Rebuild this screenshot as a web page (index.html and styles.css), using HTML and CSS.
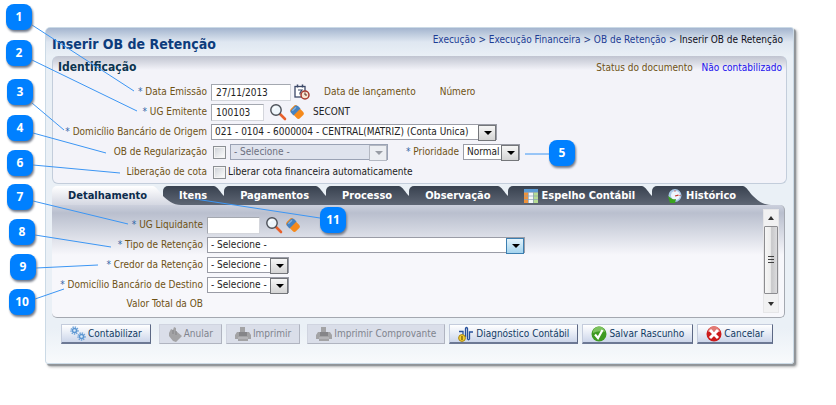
FILE: index.html
```
<!DOCTYPE html>
<html lang="pt-BR">
<head>
    <meta charset="utf-8">
    <title>Inserir OB de Retenção</title>
    <link rel="stylesheet" href="styles.css">
</head>
<body>
<!-- Shared icons -->
<svg class="sprite" aria-hidden="true">
    <defs>
        <linearGradient id="tab-dark" x2="0" y2="1"><stop stop-color="#38414f"/><stop offset="1" stop-color="#5e6674"/></linearGradient>
        <linearGradient id="tab-light" x2="0" y2="1"><stop stop-color="#fff"/><stop offset="1" stop-color="#d4d7e2"/></linearGradient>
    </defs>
    <symbol id="icon-search" viewBox="0 0 18 18">
        <path d="M11 11l5 5" stroke="#e8602c" stroke-width="2.6" stroke-linecap="round"/>
        <circle cx="7" cy="7" r="5.2" fill="#eef5fb" stroke="#4c5058" stroke-width="1.4"/>
        <path d="M4.5 6.5a3 3 0 0 1 3-2.5" fill="none" stroke="#fff" stroke-width="1.2"/>
    </symbol>
    <symbol id="icon-eraser" viewBox="0 0 14 14">
        <rect x="2.5" y="0.5" width="9" height="13" rx="2.5" fill="#f58a1c" transform="rotate(-45 7 7)"/>
        <path d="M1 5.500 5 1q1.500-1.200 3 0l2.500 2.500L3.500 10.500 1 7.700q-.8-1 0-2.200z" fill="#4682c0"/>
        <path d="M2.300 5.800 6 2.200" stroke="#86b2de" stroke-width="1.200"/>
    </symbol>
    <symbol id="icon-printer" viewBox="0 0 16 14">
        <path d="M5 0h5v5h4l2 3v4h-3v2H3v-2H0V8l2-3h3z" fill="#a3a3a5"/>
        <path d="M4 5h8v4H4z" fill="#858588"/>
        <path d="M3 11h10" stroke="#c4c4c8"/>
    </symbol>
    <symbol id="icon-gear" viewBox="0 0 10 10">
        <circle cx="5" cy="5" r="3.900" fill="none" stroke="#6fa3d8" stroke-width="1.600" stroke-dasharray="1.500 1.100"/>
        <circle cx="5" cy="5" r="2.300" fill="#dcebf8" stroke="#5c96d2" stroke-width="1.700"/>
    </symbol>
    <symbol id="tab-curve" viewBox="0 0 28 19">
        <path d="M0 0C4 1 6 6 10 10C14 14 20 19 28 19H0z"/>
    </symbol>
</svg>

<main class="window">
    <header class="window-header">
        <h1 class="window-title">Inserir OB de Retenção</h1>
        <nav class="breadcrumb">
            <a href="#">Execução</a> &gt; <a href="#">Execução Financeira</a> &gt; <a href="#">OB de Retenção</a> &gt; <span class="current">Inserir OB de Retenção</span>
        </nav>
    </header>

    <section class="section">
        <div class="section-header">
            <h2 class="section-title">Identificação</h2>
            <div class="doc-status">Status do documento <span class="doc-status-value">Não contabilizado</span></div>
        </div>

        <div class="row">
            <label class="label" for="data-emissao"><span class="req">*</span> Data Emissão</label>
            <input class="input input-date" id="data-emissao" type="text" value="27/11/2013">
            <button class="icon-btn" type="button" aria-label="Calendário">
                <svg width="16" height="16" viewBox="0 0 16 16">
                    <rect x="1" y="2.500" width="10" height="10.500" fill="#fff" stroke="#3c4868" stroke-width="1.300"/>
                    <path d="M3.500 0.500v3M8.500 0.500v3" stroke="#3c4868" stroke-width="1.500"/>
                    <path d="M4 6h4L6 9v1.500" fill="none" stroke="#3c4868" stroke-width="1.200"/>
                    <circle cx="11" cy="11" r="4" fill="#f7e4d0" stroke="#a83a2e" stroke-width="1.500"/>
                    <path d="M11 8.500V11h2" fill="none" stroke="#5a2a22"/>
                </svg>
            </button>
            <span class="caption">Data de lançamento</span>
            <span class="caption">Número</span>
        </div>
        <div class="row">
            <label class="label" for="ug-emitente"><span class="req">*</span> UG Emitente</label>
            <input class="input input-code" id="ug-emitente" type="text" value="100103">
            <button class="icon-btn" type="button" aria-label="Pesquisar"><svg width="18" height="18"><use href="#icon-search"/></svg></button>
            <button class="icon-btn" type="button" aria-label="Limpar"><svg width="14" height="14"><use href="#icon-eraser"/></svg></button>
            <span class="value">SECONT</span>
        </div>
        <div class="row">
            <label class="label" for="domicilio-origem"><span class="req">*</span> Domicílio Bancário de Origem</label>
            <span class="select select-account">
                <select id="domicilio-origem"><option>021 - 0104 - 6000004 - CENTRAL(MATRIZ) (Conta Unica)</option></select>
            </span>
        </div>
        <div class="row">
            <label class="label" for="ob-regularizacao">OB de Regularização</label>
            <input class="checkbox" id="ob-regularizacao" type="checkbox">
            <span class="select select-disabled">
                <select aria-label="Tipo de regularização" disabled><option>- Selecione -</option></select>
            </span>
            <label class="label-inline" for="prioridade"><span class="req">*</span> Prioridade</label>
            <span class="select select-priority">
                <select id="prioridade"><option>Normal</option></select>
            </span>
        </div>
        <div class="row">
            <span class="label">Liberação de cota</span>
            <input class="checkbox" id="liberar-cota" type="checkbox">
            <label class="check-text" for="liberar-cota">Liberar cota financeira automaticamente</label>
        </div>
    </section>

    <div class="tabs" role="tablist">
        <button class="tab active" type="button" role="tab" aria-selected="true">Detalhamento<svg class="tab-end"><use href="#tab-curve"/></svg></button>
        <button class="tab" type="button" role="tab">Itens<svg class="tab-end"><use href="#tab-curve"/></svg></button>
        <button class="tab" type="button" role="tab">Pagamentos<svg class="tab-end"><use href="#tab-curve"/></svg></button>
        <button class="tab" type="button" role="tab">Processo<svg class="tab-end"><use href="#tab-curve"/></svg></button>
        <button class="tab" type="button" role="tab">Observação<svg class="tab-end"><use href="#tab-curve"/></svg></button>
        <button class="tab" type="button" role="tab">
            <svg width="14" height="14" viewBox="0 0 14 14">
                <rect width="14" height="14" fill="#f4f7fa"/>
                <rect width="14" height="3" fill="#5b9bd5"/>
                <rect y="3" width="4" height="11" fill="#f0923a"/>
                <rect x="9" y="3" width="5" height="11" fill="#b6dc92"/>
                <path d="M0 3.500h14M0 7h14M0 10.500h14M4.500 3v11M9.500 3v11" stroke="#8aa0b4" stroke-width=".7"/>
            </svg>
            Espelho Contábil<svg class="tab-end"><use href="#tab-curve"/></svg></button>
        <button class="tab" type="button" role="tab">
            <svg width="14" height="14" viewBox="0 0 14 14">
                <circle cx="7" cy="6.500" r="6.500" fill="#a9c8e6"/>
                <circle cx="7.500" cy="6.500" r="4.500" fill="#eef5fc"/>
                <path d="M7 7l3.500-.8M7 1.500v1M11.500 6.500h1" stroke="#c03a30" stroke-width="1.200"/>
                <path d="M0 7l3 2c1.500 1.500 3 1.500 5 1L7 14H2z" fill="#3aa41e"/>
            </svg>
            Histórico<svg class="tab-end"><use href="#tab-curve"/></svg></button>
    </div>

    <section class="panel">
        <div class="panel-form">
            <div class="row">
                <label class="label" for="ug-liquidante"><span class="req">*</span> UG Liquidante</label>
                <input class="input input-code" id="ug-liquidante" type="text">
                <button class="icon-btn" type="button" aria-label="Pesquisar"><svg width="18" height="18"><use href="#icon-search"/></svg></button>
                <button class="icon-btn" type="button" aria-label="Limpar"><svg width="14" height="14"><use href="#icon-eraser"/></svg></button>
            </div>
            <div class="row">
                <label class="label" for="tipo-retencao"><span class="req">*</span> Tipo de Retenção</label>
                <span class="select select-type">
                    <select id="tipo-retencao"><option>- Selecione -</option></select>
                </span>
            </div>
            <div class="row">
                <label class="label" for="credor"><span class="req">*</span> Credor da Retenção</label>
                <span class="select select-small">
                    <select id="credor"><option>- Selecione -</option></select>
                </span>
            </div>
            <div class="row">
                <label class="label" for="domicilio-destino"><span class="req">*</span> Domicílio Bancário de Destino</label>
                <span class="select select-small">
                    <select id="domicilio-destino"><option>- Selecione -</option></select>
                </span>
            </div>
            <div class="row row-last">
                <span class="label">Valor Total da OB</span>
            </div>
        </div>
        <div class="scrollbar">
            <span class="arrow-up"></span>
            <span class="thumb"><span class="grip"></span></span>
            <span class="arrow-down"></span>
        </div>
    </section>

    <footer class="actions">
        <button class="button button-first" type="button">
            <svg width="16" height="16"><use href="#icon-gear" width="9" height="9"/><use href="#icon-gear" x="7" y="6" width="9" height="9"/></svg>
            Contabilizar
        </button>
        <button class="button" type="button" disabled>
            <svg width="14" height="15" viewBox="0 0 14 15"><path d="M1 6l2-4 2 1 1-3 2 1v3l6 5-6 6-3-1-4-5z" fill="#a3a3a5"/><path d="M5 3v4M8 4v4" stroke="#858588"/></svg>
            Anular
        </button>
        <button class="button button-print" type="button" disabled>
            <svg width="16" height="14"><use href="#icon-printer"/></svg>
            Imprimir
        </button>
        <button class="button" type="button" disabled>
            <svg width="16" height="14"><use href="#icon-printer"/></svg>
            Imprimir Comprovante
        </button>
        <button class="button" type="button">
            <svg width="16" height="16" viewBox="0 0 16 16">
                <path d="M1 5.500h4V9M7.500 11V2.500q1-2 2 0V13q1 1.500 2 0V6H15" fill="none" stroke="#26509c" stroke-width="1.300"/>
                <circle cx="4" cy="12" r="3.400" fill="#f6cf30" stroke="#a58414"/>
                <path d="M4 10v4" stroke="#6c5204" stroke-width="1.200"/>
            </svg>
            Diagnóstico Contábil
        </button>
        <button class="button" type="button">
            <svg width="16" height="16" viewBox="0 0 16 16">
                <circle cx="8" cy="8" r="7.500" fill="#3f9a22"/>
                <path d="M2 7a6 6 0 0 1 12-1q-6-2-12 1z" fill="#7cc25e"/>
                <path d="M4 8.500l3 3.500L11.500 4" fill="none" stroke="#fff" stroke-width="2.200"/>
            </svg>
            Salvar Rascunho
        </button>
        <button class="button" type="button">
            <svg width="16" height="16" viewBox="0 0 16 16">
                <circle cx="8" cy="8" r="7.500" fill="#cc1c1c"/>
                <path d="M2 6a6 6 0 0 1 12 0q-6-2-12 0z" fill="#e27a74"/>
                <path d="M4 4l8 8M12 4l-8 8" stroke="#fff" stroke-width="3"/>
            </svg>
            Cancelar
        </button>
    </footer>
</main>

<!-- Numbered callouts over the form -->
<svg class="callouts" width="600" height="330">
    <g class="callout-lines">
        <path d="M32 25L134 91M32 60L137 111M32 103L64 130M33 133L106 153M33 201L128 224M33 165L120 173M35 235L111 247M36 268L98 265M35 299L64 289M549 154H525M320 218L195 199"/>
    </g>
    <g class="callout" transform="translate(6 4)"><rect width="26" height="26" rx="8"/><text x="13" y="17">1</text></g>
    <g class="callout" transform="translate(6 40)"><rect width="26" height="26" rx="8"/><text x="13" y="17">2</text></g>
    <g class="callout" transform="translate(7 79)"><rect width="26" height="26" rx="8"/><text x="13" y="17">3</text></g>
    <g class="callout" transform="translate(7 115)"><rect width="26" height="26" rx="8"/><text x="13" y="17">4</text></g>
    <g class="callout" transform="translate(549 140)"><rect width="26" height="26" rx="8"/><text x="13" y="17">5</text></g>
    <g class="callout" transform="translate(7 150)"><rect width="26" height="26" rx="8"/><text x="13" y="17">6</text></g>
    <g class="callout" transform="translate(7 184)"><rect width="26" height="26" rx="8"/><text x="13" y="17">7</text></g>
    <g class="callout" transform="translate(9 219)"><rect width="26" height="26" rx="8"/><text x="13" y="17">8</text></g>
    <g class="callout" transform="translate(10 254)"><rect width="26" height="26" rx="8"/><text x="13" y="17">9</text></g>
    <g class="callout" transform="translate(9 289)"><rect width="26" height="26" rx="8"/><text x="13" y="17">10</text></g>
    <g class="callout" transform="translate(320 207)"><rect width="26" height="26" rx="8"/><text x="13" y="17">11</text></g>
</svg>
</body>
</html>
```
FILE: styles.css
```
* {
    box-sizing: border-box;
}
body {
    margin: 0;
    padding: 27px 42px 16px 45px;
    background: #fff;
    color: #222;
    font-family: "DejaVu Sans Condensed", "Noto Sans", sans-serif;
    font-size: 10px;
    line-height: 16px;
}
button, input, select {
    font: inherit;
    color: inherit;
    margin: 0;
}
.sprite {
    position: absolute;
    width: 0;
    height: 0;
}

.window {
    padding: 0 6px 19px;
    background: linear-gradient(#a4b5cf, #dfe7f1 14px, #eaf0f6 28px, #eaf0f6 300px, #f8fafc);
    border: 1px solid #cbdae6;
    border-radius: 5px 3px 3px 3px;
    box-shadow: 2px 2px 1px #909498, 3px 3px 3px #b0b0b0;
}
.window-header {
    display: flex;
    justify-content: space-between;
    height: 28px;
    padding: 4px 4px 0 0;
}
.window-title {
    margin: 0;
    padding-top: 3px;
    font-size: 14px;
    line-height: 18px;
    color: #0d3c7c;
}
.breadcrumb {
    color: #1c3c84;
}
.breadcrumb a {
    color: #1c3c94;
    text-decoration: none;
}
.breadcrumb .current {
    color: #101020;
}

/* Identification */
.section {
    padding: 2px 4px 0 5px;
    background: linear-gradient(#c0c4d0, #f3f3f9 14px);
    border: 1px solid #c3cddb;
    border-top: 0;
    border-radius: 6px;
    height: 128px;
}
.section-header {
    display: flex;
    justify-content: space-between;
    height: 24px;
}
.section-title {
    margin: 0;
    font-size: 12px;
    line-height: 18px;
    color: #0c3550;
}
.doc-status {
    line-height: 20px;
    color: #6e5214;
}
.doc-status-value {
    margin-left: 6px;
    color: #1a10ee;
}

/* Form rows */
.row {
    display: flex;
    align-items: center;
    height: 20px;
}
.label {
    width: 149px;
    margin-right: 4px;
    text-align: right;
    white-space: nowrap;
    color: #6e5214;
}
.label-inline {
    margin: 0 4px 0 18px;
    color: #6e5214;
}
.req {
    color: #3468a8;
}
.caption {
    margin: 0 10px 0 14px;
    color: #6e5214;
}
.value {
    margin-left: 9px;
}
.check-text {
    margin-left: 2px;
}
.input {
    height: 17px;
    padding: 0 4px;
    background: #fff;
    border: 1px solid #d4d6dc;
    border-top-color: #a4a8b0;
    border-left-color: #a4a8b0;
}
.input-date {
    width: 80px;
}
.input-code {
    width: 53px;
    margin-right: 2px;
}
.icon-btn {
    display: flex;
    padding: 0;
    margin-left: 3px;
    background: none;
    border: 0;
    cursor: pointer;
}
.checkbox {
    appearance: none;
    width: 13px;
    height: 13px;
    margin-left: 2px;
    background: linear-gradient(135deg, #ccd0d6, #fff);
    border: 1px solid #8c9094;
    box-shadow: inset 0 0 0 1px #f4f4f4;
}
.select {
    position: relative;
    display: flex;
    height: 16px;
    background: #fff;
    border: 1px solid #9a9ca6;
}
.select select {
    appearance: none;
    width: 100%;
    height: 14px;
    padding: 0 16px 0 3px;
    background: none;
    border: 0;
    line-height: 14px;
    opacity: 1;
}
.select::before {
    content: "";
    position: absolute;
    top: 0;
    right: 0;
    width: 16px;
    height: 14px;
    background: linear-gradient(#f6f6f6, #d4d4d4);
    border: 1px solid #74767a;
    pointer-events: none;
}
.select::after {
    content: "";
    position: absolute;
    top: 6px;
    right: 4px;
    border: 4px solid transparent;
    border-top-color: #000;
    border-bottom: 0;
    pointer-events: none;
}
.select-account {
    width: 286px;
}
.select-priority {
    width: 57px;
}
.select-type {
    width: 318px;
}
.select-type::before {
    background: linear-gradient(#e4f3fb, #a4d4ee);
    border-color: #3c7fb1;
}
.select-small {
    width: 82px;
}
.select-disabled {
    width: 158px;
    margin-left: 4px;
    background: #dfe3ed;
    border-color: #9aa2b4;
    color: #6c7080;
}
.select-disabled::before {
    background: #eceef2;
    border-color: #b4b8c2;
}
.select-disabled::after {
    border-top-color: #989ca4;
}

/* Tabs */
.tabs {
    display: flex;
    height: 19px;
    margin-top: 2px;
}
.tab {
    position: relative;
    display: flex;
    align-items: center;
    gap: 4px;
    height: 19px;
    margin-right: 10px;
    padding: 0 7px 0 16px;
    background: linear-gradient(#38414f, #5e6674);
    border: 0;
    border-radius: 5px 0 0 0;
    color: #fff;
    font-size: 11px;
    font-weight: bold;
    line-height: 16px;
    white-space: nowrap;
    cursor: pointer;
}
.tab-end {
    position: absolute;
    left: 100%;
    top: 0;
    width: 28px;
    height: 19px;
    fill: url(#tab-dark);
}
.tab.active {
    z-index: 1;
    padding: 0 6px 0 16px;
    background: linear-gradient(#fff, #d4d7e2);
    color: #0c2c4c;
}
.tab.active .tab-end {
    fill: url(#tab-light);
}

/* Tab panel */
.panel {
    display: flex;
    justify-content: space-between;
    min-height: 112px;
    margin-right: 2px;
    padding: 4px 5px 4px 1px;
    background: linear-gradient(#ccd0dd, #b9bfce 8px, #f7f7fb 50px);
    border-right: 1px solid #a4a8b0;
    border-bottom: 1px solid #a4a8b0;
    border-radius: 0 5px 5px 5px;
}
.panel-form {
    padding-top: 6px;
}
.panel .label {
    width: 150px;
}
.panel .row-last {
    height: 18px;
}
.scrollbar {
    display: flex;
    flex-direction: column;
    align-items: center;
    width: 16px;
    background: #f1f1f2;
    border: 1px solid #e6e6e8;
}
.arrow-up {
    margin: 6px 0;
    border: 3px solid transparent;
    border-top: 0;
    border-bottom: 4px solid #303030;
}
.arrow-down {
    margin: 8px 0 6px;
    border: 3px solid transparent;
    border-bottom: 0;
    border-top: 4px solid #303030;
}
.thumb {
    flex: 1;
    display: flex;
    align-items: center;
    justify-content: center;
    width: 14px;
    background: linear-gradient(90deg, #f6f6f6, #ececec 45%, #c8c8ca 55%, #dcdcde);
    border: 1px solid #8c8c90;
    border-radius: 1px;
}
.grip {
    width: 6px;
    height: 8px;
    background: repeating-linear-gradient(#404040 0 1px, transparent 1px 3px);
}

/* Action buttons */
.actions {
    display: flex;
    gap: 4px;
    padding: 6px 9px 0;
}
.button {
    display: flex;
    align-items: center;
    justify-content: center;
    gap: 2px;
    height: 20px;
    padding: 0 8px;
    background: linear-gradient(#fff, #e6ebf5 50%, #ccd6ea);
    border: 1px solid #c4ccdc;
    border-right-color: #5c6884;
    border-bottom: 2px solid #6c7894;
    color: #123c64;
    white-space: nowrap;
    cursor: pointer;
}
.button:disabled {
    background: #dadee9;
    border: 1px solid #d0d4e0;
    border-right-color: #b0b4c0;
    border-bottom-color: #b0b4c0;
    color: #80848e;
    cursor: default;
}
.button-first {
    margin-right: 4px;
}
.button-print {
    margin-right: 3px;
}

/* Callouts */
.callouts {
    position: absolute;
    top: 0;
    left: 0;
    pointer-events: none;
}
.callout-lines {
    fill: none;
    stroke: #3c96f4;
}
.callout rect {
    fill: #0080ff;
    filter: drop-shadow(1px 2px 1px #707888);
}
.callout text {
    fill: #fff;
    font-family: "Open Sans", sans-serif;
    font-size: 12px;
    font-weight: bold;
    text-anchor: middle;
}
```
